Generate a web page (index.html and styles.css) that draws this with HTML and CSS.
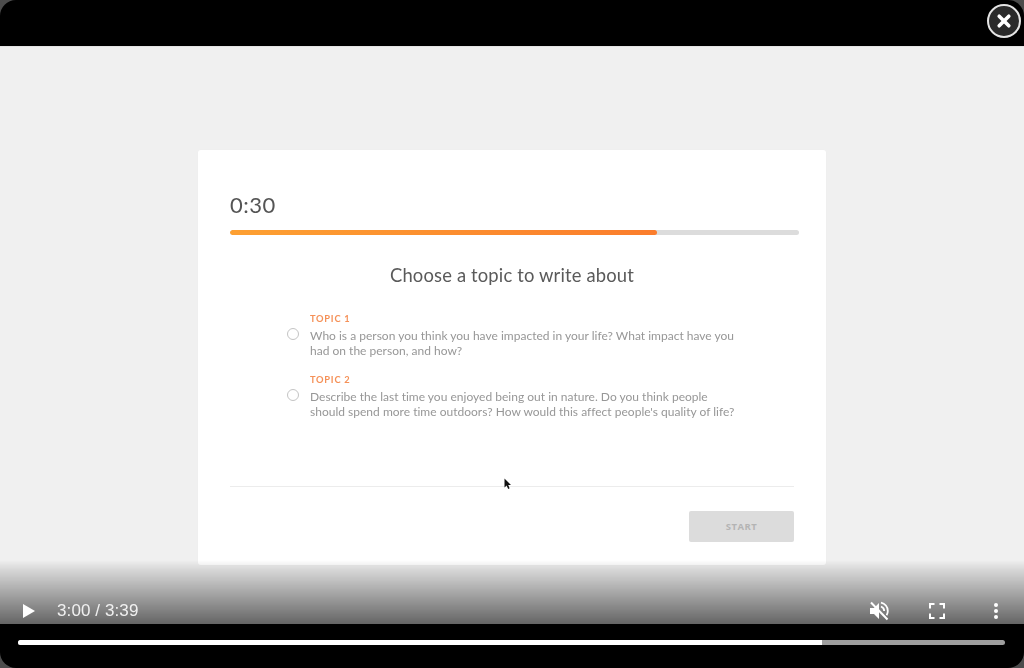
FILE: index.html
```html
<!DOCTYPE html>
<html lang="en">
<head>
<meta charset="utf-8">
<title>Video player</title>
<link rel="stylesheet" href="styles.css">
</head>
<body>
<div class="player">
  <header class="top-bar">
    <button class="close" aria-label="Close">
      <svg viewBox="0 0 16 16" width="16" height="16"><path d="M3.2 3.2 12.8 12.8M12.8 3.2 3.2 12.8" stroke="#fff" stroke-width="3.6" stroke-linecap="round" fill="none"/></svg>
    </button>
  </header>
  <main class="stage">
    <section class="card">
      <div class="timer">0:30</div>
      <div class="track"><div class="fill"></div></div>
      <h1 class="title">Choose a topic to write about</h1>
      <div class="topics">
        <div class="topic">
          <span class="radio"></span>
          <div class="topic-body">
            <div class="label">TOPIC 1</div>
            <p class="prompt">Who is a person you think you have impacted in your life? What impact have you<br>had on the person, and how?</p>
          </div>
        </div>
        <div class="topic">
          <span class="radio"></span>
          <div class="topic-body">
            <div class="label">TOPIC 2</div>
            <p class="prompt">Describe the last time you enjoyed being out in nature. Do you think people<br>should spend more time outdoors? How would this affect people's quality of life?</p>
          </div>
        </div>
      </div>
      <div class="footer">
        <button class="start">START</button>
      </div>
      <svg class="cursor" viewBox="0 0 8 12" width="8" height="12"><path d="M0.5 0.5V9.5L2.6 7.6 4.2 11 5.6 10.3 4.2 7.1H7Z" fill="#111"/></svg>
    </section>
    <div class="controls">
      <svg class="play" viewBox="0 0 12 14" width="12" height="14"><path d="M0 0 12 7 0 14Z" fill="#fff"/></svg>
      <span class="time">3:00 / 3:39</span>
      <span class="spacer"></span>
      <svg class="mute" viewBox="0 0 24 24" width="24" height="24"><path d="M3 9v6h4l5 5V4L7 9H3Z" fill="#fff"/><path d="M14 7.5c2 .8 3.2 2.5 3.2 4.5M14 3.6c4 1 6.8 4.400 6.800 8.400 0 1.600-.4 3-1.200 4.300" stroke="#fff" stroke-width="1.800" fill="none"/><path d="M4 3.500 20.500 20.500" stroke="#fff" stroke-width="2"/></svg>
      <svg class="full" viewBox="0 0 16 16" width="16" height="16"><path d="M1 5.500V1H5.500M10.500 1H15V5.500M15 10.500V15H10.500M5.500 15H1V10.500" stroke="#fff" stroke-width="2" fill="none"/></svg>
      <svg class="more" viewBox="0 0 4 16" width="4" height="16"><circle cx="2" cy="2" r="2" fill="#fff"/><circle cx="2" cy="8" r="2" fill="#fff"/><circle cx="2" cy="14" r="2" fill="#fff"/></svg>
    </div>
  </main>
  <footer class="bottom-bar">
    <div class="seek"><div class="seek-fill"></div></div>
  </footer>
</div>
</body>
</html>
```
FILE: styles.css
```css
* { box-sizing: border-box; }
html, body { margin: 0; height: 100%; }
body { background: #4c4c4c; overflow: hidden; font-family: "Lato", "Open Sans", sans-serif; }
.player { width: 1024px; height: 668px; background: #000; border-radius: 16px; overflow: hidden; display: flex; flex-direction: column; }
.top-bar { height: 46px; flex: none; display: flex; justify-content: flex-end; padding: 4px 3px 0 0; }
.close { width: 34px; height: 34px; border-radius: 50%; background: #2a2a2a; border: 2px solid #e4e4e4; padding: 0; display: flex; align-items: center; justify-content: center; }
.stage { position: relative; height: 578px; flex: none; background: #f0f0f0; padding-top: 104px; border-top: 1px solid #e4e4e4; }
.card { position: relative; width: 628px; height: 415px; margin: -1px auto 0; background: #fff; border-radius: 3px; box-shadow: 0 0 2px rgba(0,0,0,.02); padding: 41px 27px 0 32px; color: #4d4d4d; filter: blur(.35px); }
.timer { font-size: 22px; line-height: 28px; letter-spacing: .5px; color: #555; }
.track { height: 5px; margin-top: 11px; background: #dcdcdc; border-radius: 3px; overflow: hidden; }
.fill { width: 75%; height: 100%; background: linear-gradient(90deg, #fda032, #fb7d2c); border-radius: 3px; }
.title { margin: 27px 0 0 -3px; font-size: 18.400px; line-height: 26px; font-weight: 400; text-align: center; color: #5a5a5a; padding-right: 2px; letter-spacing: .16px; }
.topics { margin-top: 25px; display: flex; flex-direction: column; gap: 16px; padding-left: 57px; }
.topic { display: flex; gap: 11px; align-items: flex-start; }
.radio { width: 12px; height: 12px; margin-top: 15px; flex: none; border-radius: 50%; border: 1px solid #c4c4c4; background: #fff; }
.label { font-size: 9.300px; line-height: 12px; font-weight: 700; letter-spacing: .75px; color: #f59158; }
.prompt { margin: 4px 0 0; font-size: 12px; line-height: 14.500px; color: #979797; white-space: nowrap; letter-spacing: .01px; }
.footer { position: absolute; left: 32px; right: 32px; top: 336px; border-top: 1px solid #ececec; display: flex; justify-content: flex-end; padding-top: 24px; }
.start { width: 105px; height: 31px; border: 0; border-radius: 2px; background: #dcdcdc; color: #b4b4b4; font: 700 9.500px "Open Sans", sans-serif; letter-spacing: .5px; padding-bottom: 2px; }
.cursor { position: absolute; left: 306px; top: 328px; }
.controls { position: absolute; left: 0; right: 0; bottom: 0; height: 64px; background: linear-gradient(rgba(0,0,0,0) 0%, rgba(0,0,0,.1) 15%, rgba(0,0,0,.58) 100%); display: flex; align-items: flex-end; padding: 0 26px 6px 23px; color: #eee; }
.time { margin-left: 22px; font: 17px/22px "Liberation Sans", sans-serif; letter-spacing: .1px; color: #f0f0f0; margin-bottom: -4px; }
.spacer { flex: 1; }
.mute { margin-bottom: -5px; }
.full { margin: 0 0 -1px 38px; }
.more { margin: 0 0 -1px 49px; }
.bottom-bar { flex: 1; padding: 16px 19px 0 18px; }
.seek { height: 5px; background: #9e9e9e; border-radius: 3px; overflow: hidden; }
.seek-fill { width: 81.500%; height: 100%; background: #fff; }
```
